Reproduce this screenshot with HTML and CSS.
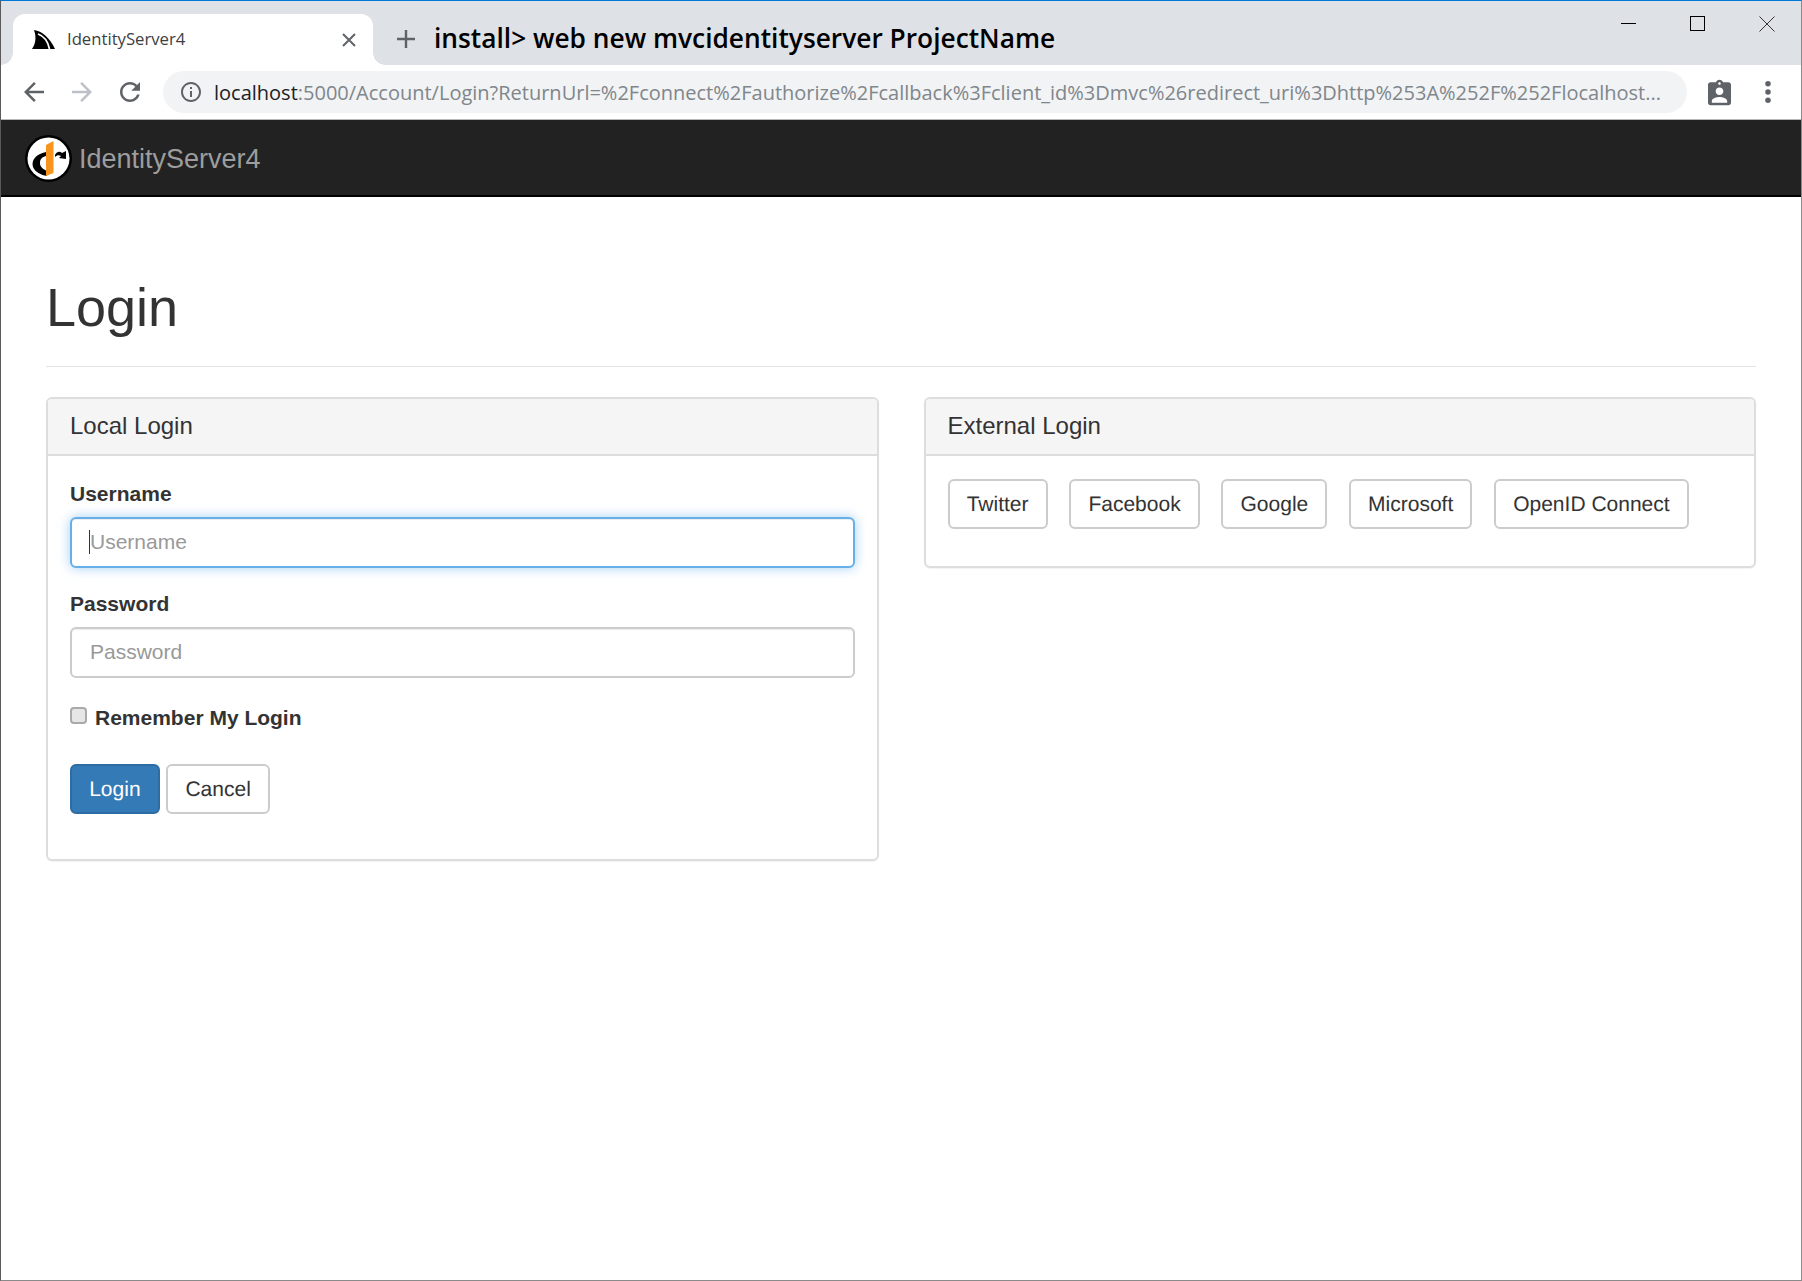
FILE: index.html
```html
<!DOCTYPE html>
<html>
<head>
	<title>IdentityServer4</title>
	<link rel="stylesheet" href="styles.css">
</head>
<body>
<div class="window">

	<!-- browser tabs -->
	<div class="tabstrip">
		<span class="flare flare-left"></span>
		<div class="tab">
			<svg class="favicon" viewBox="0 0 23 19"><path d="M2 0C10 1 18 8 23 19H0C3 15 5 8 2 0Z" fill="#000"/><path d="M6 4C12 6 16 12 17.500 19" fill="none" stroke="#fff" stroke-width="1.8"/></svg>
			<span class="tab-title">IdentityServer4</span>
			<svg class="tab-close" viewBox="0 0 14 14"><path d="M1 1L13 13M13 1L1 13" stroke="#5f6368" stroke-width="2"/></svg>
		</div>
		<span class="flare flare-right"></span>
		<svg class="newtab" viewBox="0 0 18 18"><path d="M9 0V18M0 9H18" stroke="#5f6368" stroke-width="2.4"/></svg>
		<span class="overlay-cmd">install&gt; web new mvcidentityserver ProjectName</span>
		<div class="winctl">
			<svg class="winbtn" viewBox="0 0 16 16"><path d="M0 7.5H15" stroke="#000" stroke-width="1"/></svg>
			<svg class="winbtn" viewBox="0 0 16 16"><rect x=".5" y=".5" width="14" height="14" fill="none" stroke="#000"/></svg>
			<svg class="winbtn" viewBox="0 0 16 16"><path d="M.5 .5L15.5 15.5M15.5 .5L.5 15.5" stroke="#333" stroke-width="1"/></svg>
		</div>
	</div>

	<!-- address bar -->
	<div class="toolbar">
		<svg class="tool" viewBox="0 0 24 24"><path fill="#5f6368" d="M20 11H7.83l5.59-5.59L12 4l-8 8 8 8 1.41-1.41L7.83 13H20v-2z"/></svg>
		<svg class="tool" viewBox="0 0 24 24"><path fill="#bdc1c6" d="M12 4l-1.41 1.41L16.17 11H4v2h12.17l-5.58 5.59L12 20l8-8z"/></svg>
		<svg class="tool" viewBox="0 0 24 24"><path fill="#5f6368" d="M17.65 6.35C16.2 4.9 14.21 4 12 4c-4.42 0-7.99 3.58-7.99 8s3.57 8 7.99 8c3.73 0 6.84-2.55 7.73-6h-2.08c-.82 2.33-3.04 4-5.65 4-3.31 0-6-2.69-6-6s2.69-6 6-6c1.66 0 3.14.69 4.22 1.78L13 11h7V4l-2.35 2.35z"/></svg>
		<div class="omnibox">
			<svg class="info" viewBox="0 0 24 24"><path fill="#5f6368" d="M11 7h2v2h-2zm0 4h2v6h-2zm1-9C6.48 2 2 6.48 2 12s4.48 10 10 10 10-4.48 10-10S17.52 2 12 2zm0 18c-4.41 0-8-3.59-8-8s3.59-8 8-8 8 3.59 8 8-3.59 8-8 8z"/></svg>
			<span class="url"><span class="host">localhost</span>:5000/Account/Login?ReturnUrl=%2Fconnect%2Fauthorize%2Fcallback%3Fclient_id%3Dmvc%26redirect_uri%3Dhttp%253A%252F%252Flocalhost...</span>
		</div>
		<svg class="clipboard" viewBox="3 1 18 20"><path fill="#5f6368" d="M19 3h-4.18C14.4 1.84 13.3 1 12 1s-2.4.84-2.82 2H5c-1.1 0-2 .9-2 2v14c0 1.1.9 2 2 2h14c1.1 0 2-.9 2-2V5c0-1.1-.9-2-2-2zm-7 0c.55 0 1 .45 1 1s-.45 1-1 1-1-.45-1-1 .45-1 1-1zm0 4c1.66 0 3 1.34 3 3s-1.34 3-3 3-3-1.34-3-3 1.34-3 3-3zm6 12H6v-1.4c0-2 4-3.1 6-3.1s6 1.1 6 3.1V19z"/></svg>
		<svg class="dots" viewBox="0 0 8 26"><circle cx="4" cy="4" r="3" fill="#5f6368"/><circle cx="4" cy="13" r="3" fill="#5f6368"/><circle cx="4" cy="22" r="3" fill="#5f6368"/></svg>
	</div>

	<!-- site nav -->
	<div class="navbar">
		<svg class="logo" viewBox="0 0 47 47">
			<circle cx="23.5" cy="23.5" r="23.5" fill="#000"/>
			<circle cx="23.5" cy="23.5" r="21" fill="#fff"/>
			<path d="M21 17C11 19 6 25 8 32C10 37 16 40 22 41L22 36C18 34 15 32 15 28C15 24 17 22 21 21Z" fill="#000"/>
			<path d="M21 10L28.500 6V38L21 41Z" fill="#f7941d"/>
			<path d="M30 20C32 16 35 16 37 18L41 16V24L34 23L36 21C34 20 32 20 30 22Z" fill="#000"/>
		</svg>
		<span class="brand">IdentityServer4</span>
	</div>

	<div class="page">
		<div class="pageheader">
			<h1>Login</h1>
		</div>

		<div class="columns">
			<div class="panel">
				<div class="panel-heading">Local Login</div>
				<div class="panel-body">
					<div class="form-group">
						<label class="label">Username</label>
						<div class="inputwrap">
							<input class="input input-focus" type="text" placeholder="Username">
							<span class="caret"></span>
						</div>
					</div>
					<div class="form-group">
						<label class="label">Password</label>
						<input class="input" type="password" placeholder="Password">
					</div>
					<div class="remember">
						<input class="check" type="checkbox">
						<span class="label">Remember My Login</span>
					</div>
					<div class="form-group actions">
						<button class="btn btn-primary">Login</button>
						<button class="btn">Cancel</button>
					</div>
				</div>
			</div>

			<div class="panel panel-short">
				<div class="panel-heading">External Login</div>
				<div class="panel-body">
					<div class="providers">
						<button class="btn">Twitter</button>
						<button class="btn">Facebook</button>
						<button class="btn">Google</button>
						<button class="btn">Microsoft</button>
						<button class="btn">OpenID Connect</button>
					</div>
				</div>
			</div>
		</div>
	</div>
</div>
</body>
</html>
```

FILE: styles.css
```css
* {
    box-sizing: border-box;
}
html, body {
    margin: 0;
    padding: 0;
    background: #fff;
}
body {
    font-family: "Liberation Sans", Arial, sans-serif;
    font-size: 21px;
    color: #333;
}
.window {
    width: 1802px;
    height: 1281px;
    border-top: 1px solid #0078d7;
    border-left: 1px solid #5a5a5a;
    border-right: 1px solid #8a8a8a;
    border-bottom: 1px solid #8a8a8a;
    overflow: hidden;
}

/* tabs */
.tabstrip {
    height: 64px;
    background: #dee1e6;
    display: flex;
    align-items: flex-start;
}
.tab {
    width: 360px;
    height: 51px;
    margin-top: 13px;
    background: #fff;
    border-radius: 12px 12px 0 0;
    display: flex;
    align-items: center;
    padding: 0 17px 0 19px;
}
.flare {
    width: 12px;
    height: 12px;
    align-self: flex-end;
    flex: none;
}
.flare-left {
    background: radial-gradient(circle at 0 0, #dee1e6 11.5px, #fff 12px);
}
.flare-right {
    background: radial-gradient(circle at 100% 0, #dee1e6 11.5px, #fff 12px);
}
.favicon {
    width: 23px;
    height: 19px;
    flex: none;
}
.tab-title {
    font-family: "Open Sans", sans-serif;
    font-size: 16.7px;
    color: #3c4043;
    margin-left: 12px;
    padding-bottom: 2px;
    flex: 1;
}
.tab-close {
    width: 14px;
    height: 14px;
    flex: none;
}
.newtab {
    width: 18px;
    height: 18px;
    margin: 29px 0 0 12px;
    flex: none;
}
.overlay-cmd {
    font-family: "Open Sans", sans-serif;
    font-weight: 600;
    font-size: 26.3px;
    line-height: 38px;
    color: #000;
    margin: 18px 0 0 19px;
    white-space: nowrap;
}
.winctl {
    margin-left: auto;
    display: flex;
    gap: 53px;
    padding: 15px 26px 0 0;
}
.winbtn {
    width: 16px;
    height: 16px;
}

/* address bar */
.toolbar {
    height: 55px;
    background: #fff;
    border-bottom: 1px solid #b8b8b8;
    display: flex;
    align-items: center;
    padding-left: 18px;
}
.tool {
    width: 30px;
    height: 30px;
    flex: none;
    margin-right: 18px;
}
.omnibox {
    width: 1524px;
    height: 42px;
    background: #f1f3f4;
    border-radius: 21px;
    display: flex;
    align-items: center;
    padding-left: 16px;
    flex: none;
}
.info {
    width: 24px;
    height: 24px;
    flex: none;
}
.url {
    font-family: "Open Sans", sans-serif;
    font-size: 20px;
    color: #80868b;
    margin-left: 11px;
    white-space: nowrap;
}
.host {
    color: #202124;
}
.clipboard {
    width: 23px;
    height: 27px;
    margin-left: 21px;
    flex: none;
}
.dots {
    width: 8px;
    height: 24px;
    margin-left: 33px;
    flex: none;
}

/* site */
.navbar {
    height: 77px;
    background: #222;
    border-bottom: 2px solid #000;
    display: flex;
    align-items: center;
    padding: 2px 0 0 24px;
}
.logo {
    width: 47px;
    height: 47px;
    flex: none;
}
.brand {
    font-size: 27px;
    color: #9d9d9d;
    margin: 2px 0 0 7px;
}
.page {
    padding: 81px 45px 0;
}
.pageheader {
    border-bottom: 1px solid #e3e3e3;
    padding-bottom: 13.5px;
    margin-bottom: 30px;
}
h1 {
    font-size: 54px;
    font-weight: 500;
    line-height: 1.1;
    margin: 0 0 15px;
}
.columns {
    display: flex;
    align-items: flex-start;
    gap: 45px;
}
.panel {
    flex: 1;
    border: 2px solid #ddd;
    border-radius: 6px;
    box-shadow: 0 1px 1px rgba(0, 0, 0, .05);
}
.panel-heading {
    height: 57px;
    padding: 0 22px;
    font-size: 24px;
    line-height: 54px;
    background: #f5f5f5;
    border-bottom: 2px solid #ddd;
    border-radius: 4px 4px 0 0;
}
.panel-body {
    padding: 23px 22px 22px;
}
.form-group {
    margin-bottom: 20.5px;
}
.label {
    display: block;
    font-weight: bold;
    line-height: 30px;
    margin-bottom: 8.5px;
}
.inputwrap {
    position: relative;
}
.input {
    display: block;
    width: 100%;
    height: 51px;
    padding: 8px 18px 10px;
    font: inherit;
    color: #555;
    background: #fff;
    border: 2px solid #ccc;
    border-radius: 6px;
    box-shadow: inset 0 1px 1px rgba(0, 0, 0, .075);
    outline: none;
}
.input::placeholder {
    color: #999;
    opacity: 1;
}
.input-focus {
    border-color: #66afe9;
    box-shadow: inset 0 1px 1px rgba(0, 0, 0, .075), 0 0 12px rgba(102, 175, 233, .6);
}
.caret {
    position: absolute;
    left: 19px;
    top: 13px;
    width: 1px;
    height: 24px;
    background: #333;
}
.remember {
    display: flex;
    align-items: flex-start;
    margin: 25px 0 31px;
}
.remember .label {
    margin: 0 0 0 8px;
    height: 30px;
}
.check {
    appearance: none;
    width: 17px;
    height: 17px;
    margin: 4px 0 0;
    background: #e6e6e6;
    border: 2px solid #a9a9a9;
    border-radius: 4px;
    flex: none;
}
.btn {
    height: 50px;
    padding: 10px 17.2px 8px;
    font: inherit;
    text-rendering: geometricPrecision;
    color: #333;
    background: #fff;
    border: 2px solid #ccc;
    border-radius: 6px;
}
.btn-primary {
    color: #fff;
    background: #337ab7;
    border-color: #2e6da4;
}
.actions {
    display: flex;
    gap: 6.5px;
    margin-bottom: 23px;
}
.providers {
    display: flex;
    gap: 21.5px;
    margin-bottom: 15px;
}
```
